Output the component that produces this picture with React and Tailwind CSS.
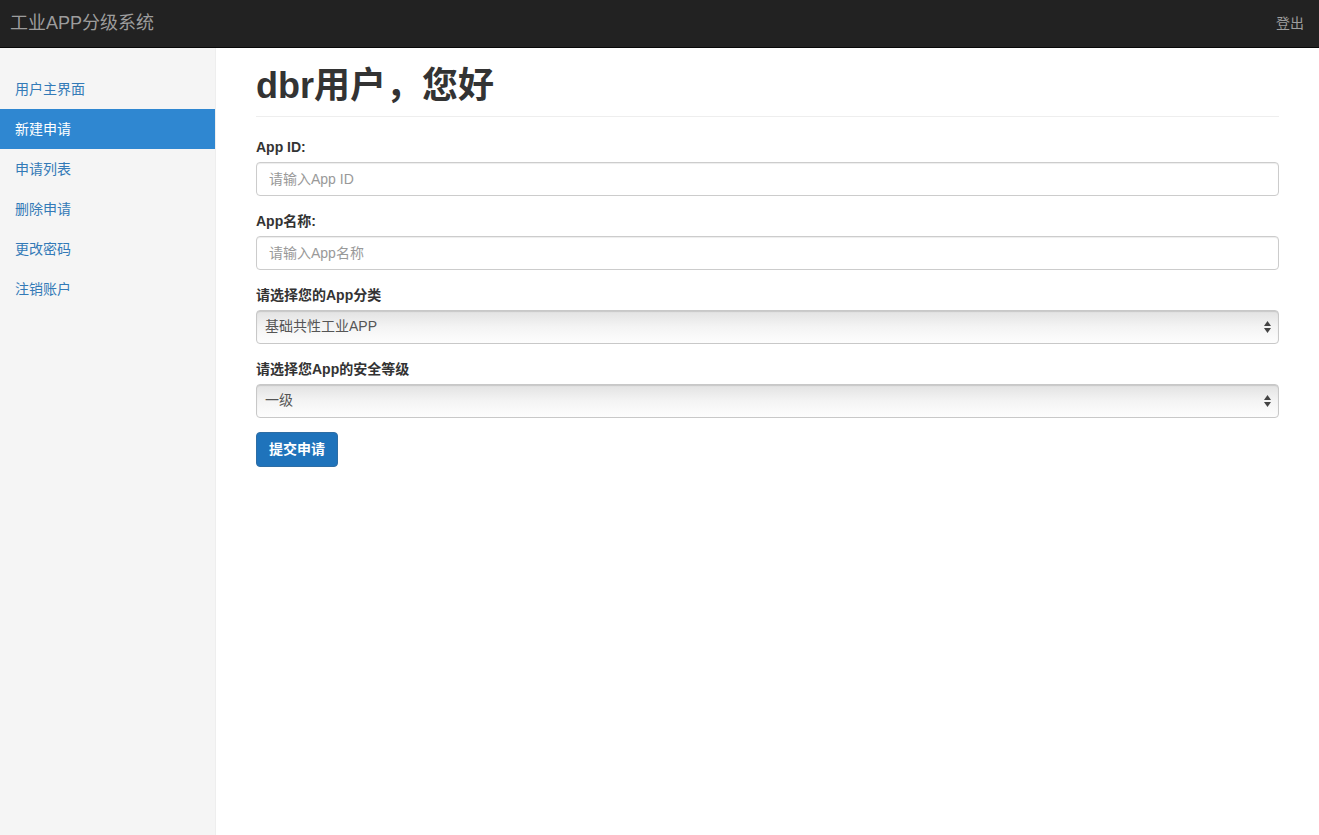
import { useState } from "react"

const navItems = ["用户主界面", "新建申请", "申请列表", "删除申请", "更改密码", "注销账户"]

function Select({ value }) {
  return (
    <div className="relative h-[34px] rounded-[4px] border border-[#c8c8c8] bg-gradient-to-b from-[#e2e2e2] via-[#f4f4f4] to-[#fdfdfd] shadow-[inset_0_1px_1px_rgba(0,0,0,0.12)] flex items-center px-2">
      <span className="text-[14px] text-[#555]">{value}</span>
      <div className="absolute right-[7px] top-1/2 -translate-y-1/2 flex flex-col items-center gap-[2px]">
        <svg width="7" height="5" viewBox="0 0 7 5"><path d="M3.5 0L7 5H0z" fill="#444" /></svg>
        <svg width="7" height="5" viewBox="0 0 7 5"><path d="M0 0h7L3.5 5z" fill="#444" /></svg>
      </div>
    </div>
  )
}

export default function App() {
  const [active, setActive] = useState(1)

  return (
    <div className="min-h-[835px] flex flex-col bg-white font-['Liberation_Sans','Noto_Sans_CJK_SC',sans-serif] text-[14px] text-[#333]">
      {/* top navbar */}
      <header className="h-[48px] bg-[#222] border-b border-[#080808] flex items-center justify-between px-[10px]">
        <span className="text-[18px] text-[#9d9d9d]">工业APP分级系统</span>
        <span className="text-[14px] text-[#9d9d9d] mr-[5px]">登出</span>
      </header>

      <div className="flex flex-1">
        {/* sidebar */}
        <aside className="w-[216px] shrink-0 bg-[#f5f5f5] border-r border-[#eee] pt-[21px]">
          {navItems.map((item, i) => (
            <div
              key={item}
              onClick={() => setActive(i)}
              className={
                "h-[40px] flex items-center px-[15px] text-[14px] cursor-pointer " +
                (i === active ? "bg-[#2f87d1] text-white" : "text-[#337ab7]")
              }
            >
              {item}
            </div>
          ))}
        </aside>

        {/* main content */}
        <main className="flex-1 px-[40px] pt-[18px]">
          <h1 className="text-[36px] font-bold leading-[1.1] pb-[10px] border-b border-[#eee] mb-[20px]">dbr用户，您好</h1>

          <div className="mb-[15px]">
            <label className="block font-bold mb-[4px]">App ID:</label>
            <input
              className="w-full h-[34px] rounded-[4px] border border-[#ccc] px-[12px] text-[14px] placeholder:text-[#999] shadow-[inset_0_1px_1px_rgba(0,0,0,0.075)] outline-none"
              placeholder="请输入App ID"
            />
          </div>

          <div className="mb-[15px]">
            <label className="block font-bold mb-[4px]">App名称:</label>
            <input
              className="w-full h-[34px] rounded-[4px] border border-[#ccc] px-[12px] text-[14px] placeholder:text-[#999] shadow-[inset_0_1px_1px_rgba(0,0,0,0.075)] outline-none"
              placeholder="请输入App名称"
            />
          </div>

          <div className="mb-[15px]">
            <label className="block font-bold mb-[4px]">请选择您的App分类</label>
            <Select value="基础共性工业APP" />
          </div>

          <div className="mb-[14px]">
            <label className="block font-bold mb-[4px]">请选择您App的安全等级</label>
            <Select value="一级" />
          </div>

          <button className="h-[35px] px-[12px] rounded-[4px] bg-[#1f73bb] border border-[#2e6da4] text-white font-bold text-[14px]">
            提交申请
          </button>
        </main>
      </div>
    </div>
  )
}
